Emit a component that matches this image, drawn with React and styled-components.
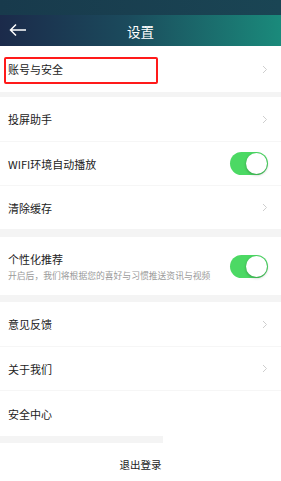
import React from "react";
import styled, { createGlobalStyle } from "styled-components";

const Global = createGlobalStyle`
  html, body { margin: 0; padding: 0; background: #fff; }
  body {
    font-family: "Noto Sans CJK SC", "Noto Sans", sans-serif;
    color: #222;
    overflow: hidden;
  }
`;

const Page = styled.div`
  width: 281px;
  height: 481px;
  display: flex;
  flex-direction: column;
  background: #fff;
  position: relative;
  overflow: hidden;
`;

const StatusBar = styled.div`
  height: 15px;
  background: linear-gradient(90deg, #183a4c 0%, #1a4554 100%);
`;

const Header = styled.div`
  height: 31px;
  display: flex;
  align-items: center;
  justify-content: center;
  position: relative;
  background: linear-gradient(90deg, #1b2a4a 0%, #1b4a5c 45%, #1a8a7b 100%);
  color: #fff;
  font-size: 13.5px;
`;

const Back = styled.div`
  position: absolute;
  left: 9px;
  top: 8px;
  width: 18px;
  height: 14px;
  display: flex;
`;

const Gap = styled.div`
  height: ${(p) => p.h}px;
  width: ${(p) => (p.w ? `${p.w}px` : "100%")};
  background: #f4f4f4;
`;

const Row = styled.div`
  height: ${(p) => p.h || 44}px;
  display: flex;
  align-items: center;
  padding: 0 8px 0 8px;
  border-top: ${(p) => (p.divider ? "1px solid #f6f6f6" : "none")};
  box-sizing: border-box;
  position: relative;
`;

const Label = styled.div`
  flex: 1;
  font-size: 11px;
  color: #222;
  display: flex;
  flex-direction: column;
  gap: 2px;
`;

const Sub = styled.div`
  font-size: 8.8px;
  color: #9a9a9a;
  white-space: nowrap;
`;

const Highlight = styled.div`
  position: absolute;
  left: 4px;
  top: 11px;
  width: 150px;
  height: 23px;
  border: 2px solid #ff1a1a;
  border-radius: 2px;
`;

const Switch = styled.div`
  width: 38px;
  height: 23px;
  border-radius: 12px;
  background: #4cd964;
  position: relative;
  margin-right: 5px;
`;

const Knob = styled.div`
  position: absolute;
  right: 1px;
  top: 1px;
  width: 21px;
  height: 21px;
  border-radius: 50%;
  background: #fff;
  box-shadow: 0 1px 3px rgba(0, 0, 0, 0.3);
`;

const Logout = styled.div`
  flex: 1;
  display: flex;
  align-items: center;
  justify-content: center;
  font-size: 10.5px;
  color: #222;
  padding-top: 4px;
`;

const Chevron = () => (
  <svg width="6" height="9" viewBox="0 0 6 9" style={{ marginRight: 5 }}>
    <path d="M1 1 L4.5 4.5 L1 8" fill="none" stroke="#c8c8c8" strokeWidth="0.9" />
  </svg>
);

const Toggle = () => (
  <Switch>
    <Knob />
  </Switch>
);

export default function App() {
  return (
    <Page>
      <Global />
      <StatusBar />
      <Header>
        <Back>
          <svg width="18" height="14" viewBox="0 0 18 14">
            <path d="M17 7 H2 M7 1.5 L1.5 7 L7 12.5" fill="none" stroke="#fff" strokeWidth="1.5" />
          </svg>
        </Back>
        设置
      </Header>

      <Row h={46}>
        <Highlight />
        <Label>账号与安全</Label>
        <Chevron />
      </Row>
      <Gap h={5} />

      <Row>
        <Label>投屏助手</Label>
        <Chevron />
      </Row>
      <Row divider>
        <Label>WIFI环境自动播放</Label>
        <Toggle />
      </Row>
      <Row divider>
        <Label>清除缓存</Label>
        <Chevron />
      </Row>
      <Gap h={8} />

      <Row h={58}>
        <Label>
          个性化推荐
          <Sub>开启后，我们将根据您的喜好与习惯推送资讯与视频</Sub>
        </Label>
        <Toggle />
      </Row>
      <Gap h={7} />

      <Row>
        <Label>意见反馈</Label>
        <Chevron />
      </Row>
      <Row divider>
        <Label>关于我们</Label>
        <Chevron />
      </Row>
      <Row divider h={46}>
        <Label>安全中心</Label>
      </Row>
      <Gap h={7} w={163} />
      <Logout>退出登录</Logout>
    </Page>
  );
}
